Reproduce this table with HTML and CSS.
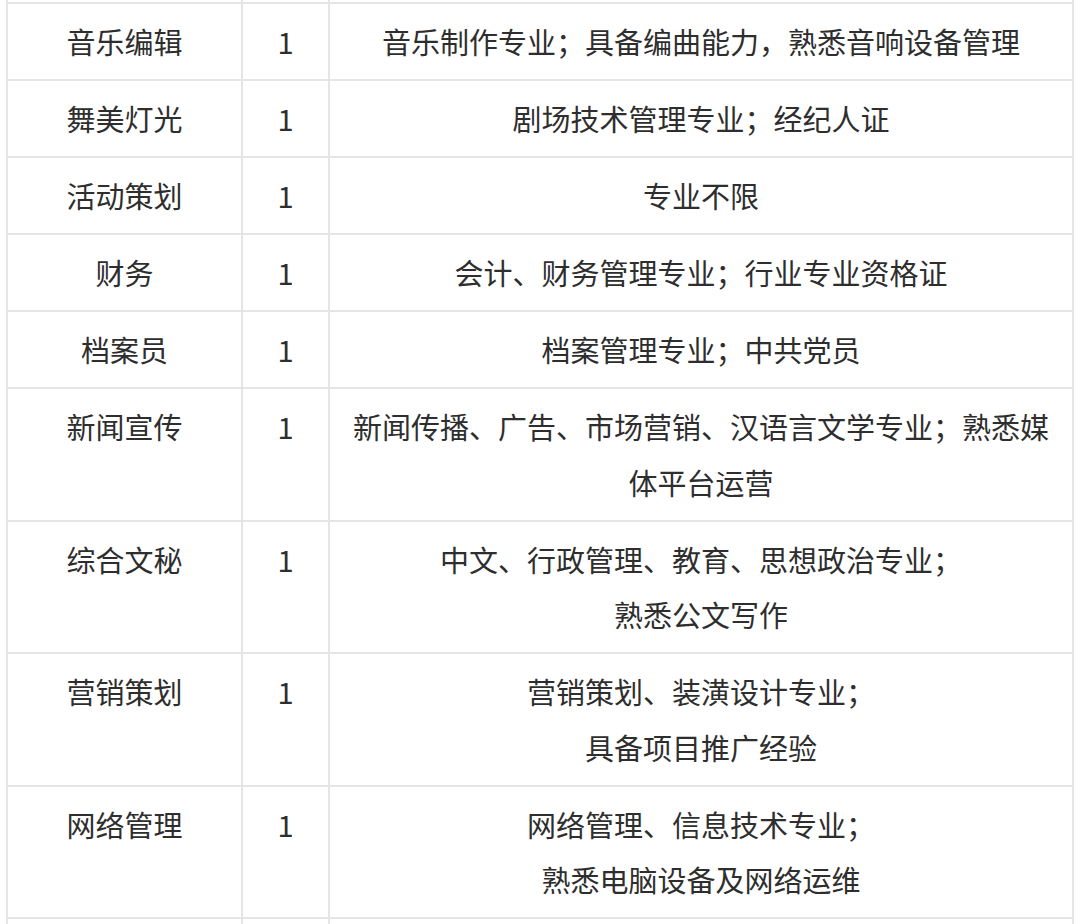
FILE: index.html
```html
<!DOCTYPE html>
<html lang="zh">
<head>
<meta charset="utf-8">
<link rel="stylesheet" href="styles.css">
</head>
<body>
<table class="jobs">
  <colgroup>
    <col class="c-name">
    <col class="c-num">
    <col class="c-req">
  </colgroup>
  <tbody>
    <tr class="spacer"><td></td><td></td><td></td></tr>
    <tr><td>音乐编辑</td><td>1</td><td>音乐制作专业；具备编曲能力，熟悉音响设备管理</td></tr>
    <tr><td>舞美灯光</td><td>1</td><td>剧场技术管理专业；经纪人证</td></tr>
    <tr><td>活动策划</td><td>1</td><td>专业不限</td></tr>
    <tr><td>财务</td><td>1</td><td>会计、财务管理专业；行业专业资格证</td></tr>
    <tr><td>档案员</td><td>1</td><td>档案管理专业；中共党员</td></tr>
    <tr><td>新闻宣传</td><td>1</td><td>新闻传播、广告、市场营销、汉语言文学专业；熟悉媒体平台运营</td></tr>
    <tr><td>综合文秘</td><td>1</td><td>中文、行政管理、教育、思想政治专业；<br>熟悉公文写作</td></tr>
    <tr><td>营销策划</td><td>1</td><td>营销策划、装潢设计专业；<br>具备项目推广经验</td></tr>
    <tr><td>网络管理</td><td>1</td><td>网络管理、信息技术专业；<br>熟悉电脑设备及网络运维</td></tr>
    <tr class="spacer"><td></td><td></td><td></td></tr>
  </tbody>
</table>
</body>
</html>
```

FILE: styles.css
```css
html, body {
  margin: 0;
  padding: 0;
  background: #ffffff;
  overflow: hidden;
}

body {
  font-family: "Noto Sans CJK SC", "Noto Sans", sans-serif;
  color: #2e2e2e;
}

.jobs {
  border-collapse: collapse;
  table-layout: fixed;
  width: 1066px;
  margin: -40px 0 0 6px;
}

.c-name { width: 235px; }
.c-num { width: 87px; }
.c-req { width: 744px; }

.jobs td {
  border: 2px solid #e5e5e5;
  font-size: 29px;
  line-height: 55.5px;
  padding: 10px 18px 9.5px;
  text-align: center;
  vertical-align: top;
  word-break: break-all;
}

.jobs .spacer td {
  height: 40px;
  padding: 0;
  line-height: 0;
}
```
